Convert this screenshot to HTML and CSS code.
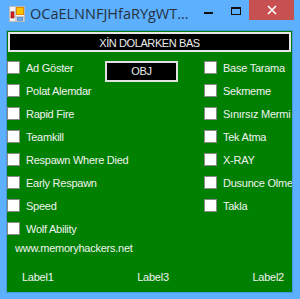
FILE: index.html
```html
<!DOCTYPE html>
<html lang="en">
<head>
  <meta charset="UTF-8">
  <title>OCaELNNFJHfaRYgWT</title>
  <link rel="stylesheet" href="styles.css">
</head>
<body>
  <div class="window">
    <div class="titlebar">
      <svg class="app-icon" width="16" height="16" viewBox="0 0 16 16">
        <rect x="0.5" y="0.5" width="15" height="15" fill="#f4f4f4" stroke="#b9b9b9"/>
        <line x1="0.5" y1="5.5" x2="6" y2="5.5" stroke="#c8c8c8"/>
        <line x1="6.5" y1="0.5" x2="6.5" y2="15.5" stroke="#c8c8c8"/>
        <line x1="0.5" y1="10.5" x2="15.5" y2="10.5" stroke="#c8c8c8"/>
        <rect x="7.5" y="1.5" width="7" height="7" fill="#f8c400" stroke="#e08a00"/>
        <rect x="2" y="6" width="3" height="6" fill="#d42020" stroke="#8a1010" stroke-width="0.6"/>
        <rect x="8" y="11.5" width="6" height="3" fill="#6aa6e8" stroke="#3a78c4" stroke-width="0.6"/>
      </svg>
      <span class="title">OCaELNNFJHfaRYgWT...</span>
      <div class="controls">
        <div class="ctl ctl-min"><span class="min-bar"></span></div>
        <div class="ctl ctl-max"><span class="max-box"></span></div>
        <div class="ctl ctl-close">
          <svg width="10" height="10" viewBox="0 0 10 10">
            <path d="M1 1 L9 9 M9 1 L1 9" stroke="#fff" stroke-width="1.6"/>
          </svg>
        </div>
      </div>
    </div>

    <div class="client">
      <div class="textbox">XİN DOLARKEN BAS</div>

      <div class="panel">
        <div class="list">
          <label class="row"><span class="box"></span><span class="text">Ad Göster</span></label>
          <label class="row"><span class="box"></span><span class="text">Polat Alemdar</span></label>
          <label class="row"><span class="box"></span><span class="text">Rapid Fire</span></label>
          <label class="row"><span class="box"></span><span class="text">Teamkill</span></label>
          <label class="row"><span class="box"></span><span class="text">Respawn Where Died</span></label>
          <label class="row"><span class="box"></span><span class="text">Early Respawn</span></label>
          <label class="row"><span class="box"></span><span class="text">Speed</span></label>
          <label class="row"><span class="box"></span><span class="text">Wolf Ability</span></label>
        </div>

        <div class="middle">
          <div class="objbox">OBJ</div>
        </div>

        <div class="list">
          <label class="row"><span class="box"></span><span class="text">Base Tarama</span></label>
          <label class="row"><span class="box"></span><span class="text">Sekmeme</span></label>
          <label class="row"><span class="box"></span><span class="text">Sınırsız Mermi</span></label>
          <label class="row"><span class="box"></span><span class="text">Tek Atma</span></label>
          <label class="row"><span class="box"></span><span class="text">X-RAY</span></label>
          <label class="row"><span class="box"></span><span class="text">Dusunce Olme</span></label>
          <label class="row"><span class="box"></span><span class="text">Takla</span></label>
        </div>
      </div>

      <div class="site">www.memoryhackers.net</div>

      <div class="labels">
        <span>Label1</span>
        <span>Label3</span>
        <span>Label2</span>
      </div>
    </div>
  </div>
</body>
</html>
```

FILE: styles.css
```css
* {
  margin: 0;
  padding: 0;
  box-sizing: border-box;
}

body {
  width: 300px;
  height: 299px;
  overflow: hidden;
  background-color: #5cb0fe;
  font-family: "Liberation Sans", Arial, sans-serif;
  font-size: 11px;
}

.window {
  width: 300px;
  height: 299px;
  display: flex;
  flex-direction: column;
}

/* title bar */
.titlebar {
  height: 30px;
  display: flex;
  align-items: flex-start;
}

.app-icon {
  margin: 6px 5px 0 9px;
  flex: none;
}

.title {
  flex: 1;
  min-width: 0;
  white-space: nowrap;
  overflow: hidden;
  font-family: "Open Sans", "Noto Sans", sans-serif;
  font-size: 14.5px;
  line-height: 28px;
  color: #25313f;
}

.controls {
  display: flex;
  margin-right: 6px;
}

.ctl {
  width: 27px;
  height: 20px;
  display: flex;
  justify-content: center;
}

.min-bar {
  width: 9px;
  height: 2px;
  margin-top: 12px;
  background-color: #111;
}

.max-box {
  width: 10px;
  height: 8px;
  margin-top: 7px;
  border: 1px solid #111;
  border-top-width: 2px;
}

.ctl-close {
  width: 45px;
  background-color: #c75050;
  align-items: center;
}

/* client area */
.client {
  margin-left: 6px;
  width: 287px;
  height: 263px;
  border: 1px solid #4c97de;
  background-color: #008000;
  color: #f2f2f2;
  letter-spacing: -0.25px;
  overflow: hidden;
}

.textbox {
  height: 20px;
  margin: 1px 1px 0 1px;
  padding-top: 2px;
  border: 2px solid #e6e6e6;
  background-color: #000;
  color: #ececec;
  text-align: center;
  line-height: 14px;
  letter-spacing: -0.4px;
}

.panel {
  margin-top: 9px;
  display: grid;
  grid-template-columns: 98px 99px 1fr;
}

.list {
  display: flex;
  flex-direction: column;
  gap: 10px;
}

.row {
  display: flex;
  height: 13px;
  white-space: nowrap;
}

.box {
  flex: none;
  width: 13px;
  height: 13px;
  background-color: #fff;
  border: 1px solid #8a8a8a;
  margin-right: 6px;
}

.text {
  padding-top: 1px;
  line-height: 12px;
}

.objbox {
  width: 73px;
  height: 21px;
  padding-top: 1px;
  border: 2px solid #e0e0e0;
  background-color: #000;
  color: #ececec;
  text-align: center;
  line-height: 15px;
}

.site {
  margin: 7px 0 0 8px;
  line-height: 13px;
}

.labels {
  margin-top: 16px;
  padding: 0 8px 0 15px;
  display: flex;
  justify-content: space-between;
  line-height: 13px;
}
```
